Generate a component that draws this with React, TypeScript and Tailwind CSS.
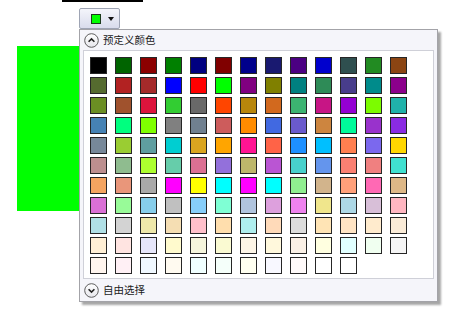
import React from "react";

// Named colours, ordered the way the picker shows them (dark to light)
const COLORS: string[] = [
  "#000000", "#006400", "#8B0000", "#008000", "#000080", "#800000", "#00008B", "#191970", "#4B0082", "#0000CD", "#2F4F4F", "#228B22", "#8B4513",
  "#556B2F", "#B22222", "#A52A2A", "#0000FF", "#FF0000", "#00FF00", "#800080", "#808000", "#008080", "#2E8B57", "#483D8B", "#008B8B", "#8B008B",
  "#6B8E23", "#A0522D", "#DC143C", "#32CD32", "#696969", "#FF4500", "#B8860B", "#D2691E", "#3CB371", "#C71585", "#9400D3", "#7CFC00", "#20B2AA",
  "#4682B4", "#00FF7F", "#7FFF00", "#808080", "#708090", "#CD5C5C", "#FF8C00", "#4169E1", "#6A5ACD", "#CD853F", "#00FA9A", "#9932CC", "#8A2BE2",
  "#778899", "#9ACD32", "#5F9EA0", "#00CED1", "#DAA520", "#FFA500", "#FF1493", "#FF6347", "#1E90FF", "#00BFFF", "#FF7F50", "#7B68EE", "#FFD700",
  "#BC8F8F", "#8FBC8F", "#ADFF2F", "#66CDAA", "#DB7093", "#9370DB", "#BDB76B", "#BA55D3", "#48D1CC", "#6495ED", "#FA8072", "#F08080", "#40E0D0",
  "#F4A460", "#E9967A", "#A9A9A9", "#FF00FF", "#FFFF00", "#00FFFF", "#FF00FF", "#00FFFF", "#90EE90", "#D2B48C", "#FFA07A", "#FF69B4", "#DEB887",
  "#DA70D6", "#98FB98", "#87CEEB", "#C0C0C0", "#87CEFA", "#7FFFD4", "#B0C4DE", "#DDA0DD", "#EE82EE", "#F0E68C", "#ADD8E6", "#D8BFD8", "#FFB6C1",
  "#B0E0E6", "#D3D3D3", "#EEE8AA", "#F5DEB3", "#FFC0CB", "#FFDEAD", "#AFEEEE", "#FFDAB9", "#DCDCDC", "#FFE4B5", "#FFE4C4", "#FFEBCD", "#FAEBD7",
  "#FFEFD5", "#FFE4E1", "#E6E6FA", "#FFFACD", "#F5F5DC", "#FAFAD2", "#FDF5E6", "#FFF8DC", "#FAF0E6", "#FFFFE0", "#E0FFFF", "#F0FFF0", "#F5F5F5",
  "#FFF5EE", "#FFF0F5", "#F0F8FF", "#FFFAF0", "#F0FFFF", "#F5FFFA", "#FFFFF0", "#F8F8FF", "#FFFAFA", "#FFFFFF", "#FFFFFF",
];

function CircleChevron({ up }: { up: boolean }) {
  return (
    <svg width="15" height="15" viewBox="0 0 15 15">
      <defs>
        <linearGradient id={up ? "cg-up" : "cg-down"} x1="0" y1="0" x2="0" y2="1">
          <stop offset="0" stopColor="#ffffff" />
          <stop offset="1" stopColor="#e6e6ec" />
        </linearGradient>
      </defs>
      <circle cx="7.5" cy="7.5" r="6.8" fill={`url(#${up ? "cg-up" : "cg-down"})`} stroke="#5c5c5c" strokeWidth="1" />
      {up ? (
        <path d="M4.6 8.8 L7.5 5.9 L10.4 8.8" fill="none" stroke="#222" strokeWidth="1.6" />
      ) : (
        <path d="M4.6 6.2 L7.5 9.1 L10.4 6.2" fill="none" stroke="#222" strokeWidth="1.6" />
      )}
    </svg>
  );
}

export default function App() {
  return (
    <div
      className="relative w-[463px] h-[329px] bg-white overflow-hidden"
      style={{ fontFamily: '"Noto Sans CJK SC", "Noto Sans", sans-serif' }}
    >
      {/* top edge of something cut off above */}
      <div className="ml-[62px] w-[81px] h-[2px] bg-black" />

      {/* colour picker button */}
      <div className="ml-[79px] mt-[6px] w-[41px] h-[21px] flex items-center gap-[7px] pl-[11px] border border-[#9ea4b4] rounded-[2px] bg-gradient-to-b from-[#f4f5fb] to-[#d9dcec]">
        <div className="w-[10px] h-[10px] bg-[#00ff00] border border-[#1c3a1c]" />
        <div className="w-0 h-0 border-l-[3px] border-r-[3px] border-t-[4px] border-l-transparent border-r-transparent border-t-[#111]" />
      </div>

      {/* current colour preview */}
      <div className="ml-[17px] mt-[17px] w-[62px] h-[165px] bg-[#00ff00]" />

      {/* dropdown popup */}
      <div className="absolute left-[79px] top-[29px] w-[359px] border border-[#a3a3a8] bg-[#f5f5fa] shadow-[3px_3px_2px_rgba(0,0,0,0.35)]">
        <div className="h-[20px] flex items-center gap-[4px] pl-[4px] text-[10.5px] text-[#1a1a1a]">
          <CircleChevron up />
          <span>预定义颜色</span>
        </div>
        <div className="mx-[3px] border border-[#cfd0d8] bg-white pl-[6px] pt-[6px] pb-[4px]">
          <div className="grid grid-cols-[repeat(13,17px)] gap-x-[8px] gap-y-[3px]">
            {COLORS.map((c, i) => (
              <div
                key={i}
                className="w-[17px] h-[17px] border border-[#262626]"
                style={{ backgroundColor: c }}
              />
            ))}
          </div>
        </div>
        <div className="h-[22px] flex items-center gap-[4px] pl-[4px] text-[10.5px] text-[#1a1a1a]">
          <CircleChevron up={false} />
          <span>自由选择</span>
        </div>
      </div>
    </div>
  );
}
